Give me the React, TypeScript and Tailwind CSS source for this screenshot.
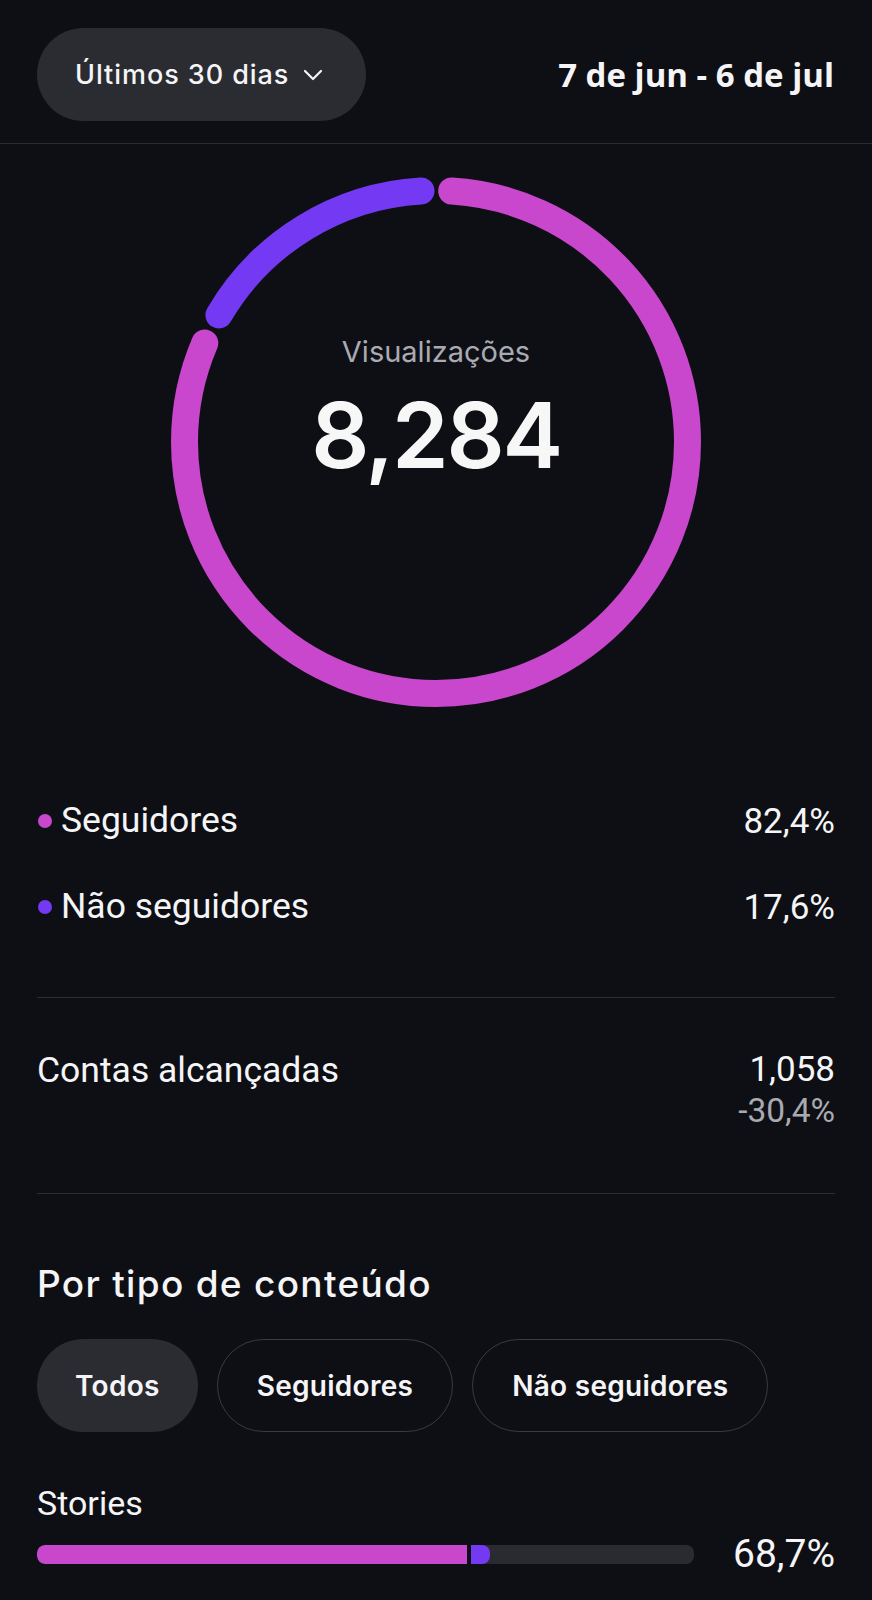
import React from "react";

const PINK = "#c847cc";
const PURPLE = "#7439f2";

function Donut() {
  const size = 530;
  const sw = 27;
  const r = (size - sw) / 2;
  const C = 2 * Math.PI * r;
  const g = 31.5;
  const pinkLen = 0.824 * C - g;
  const purpleLen = 0.176 * C - g;
  return (
    <svg width={size} height={size} viewBox={`0 0 ${size} ${size}`}>
      <g transform={`rotate(-90 ${size / 2} ${size / 2})`}>
        <circle
          cx={size / 2}
          cy={size / 2}
          r={r}
          fill="none"
          stroke={PINK}
          strokeWidth={sw}
          strokeLinecap="round"
          strokeDasharray={`${pinkLen} ${C}`}
          strokeDashoffset={-g / 2}
        />
        <circle
          cx={size / 2}
          cy={size / 2}
          r={r}
          fill="none"
          stroke={PURPLE}
          strokeWidth={sw}
          strokeLinecap="round"
          strokeDasharray={`${purpleLen} ${C}`}
          strokeDashoffset={-(0.824 * C + g / 2)}
        />
      </g>
    </svg>
  );
}

export default function App() {
  return (
    <div className="min-h-[1600px] w-[872px] bg-[#0e0f14] text-[#f5f5f7]">
      {/* Header */}
      <div className="flex h-[144px] items-center justify-between border-b border-[#2a2b30] pl-[37px] pr-[38px] pt-[6px]">
        <div className="flex h-[93px] items-center rounded-full bg-[#2b2c31] pl-[38px] pr-[43px]">
          <span className="font-['Inter',sans-serif] text-[27px] font-medium leading-none tracking-[0.035em]">
            Últimos 30 dias
          </span>
          <svg width="20" height="12" viewBox="0 0 20 12" className="ml-[14px]">
            <path d="M2 2 L10 10 L18 2" fill="none" stroke="#f5f5f7" strokeWidth="2.2" strokeLinecap="round" strokeLinejoin="round" />
          </svg>
        </div>
        <span className="font-['Open_Sans',sans-serif] text-[33px] font-bold leading-none">
          7 de jun - 6 de jul
        </span>
      </div>

      {/* Donut */}
      <div className="mt-[33px] flex justify-center">
        <div className="relative h-[530px] w-[530px]">
          <Donut />
          <div className="absolute inset-0 flex flex-col items-center justify-center">
            <span className="mt-[-66px] font-['Inter',sans-serif] text-[29px] leading-none text-[#a9abb3]">
              Visualizações
            </span>
            <span className="mt-[24px] font-['Inter',sans-serif] text-[91px] font-semibold leading-none tracking-[-0.025em] text-[#f7f7f8]">
              8,284
            </span>
          </div>
        </div>
      </div>

      {/* Legend */}
      <div className="mt-[71px] px-[37px] font-['Roboto',sans-serif]">
        <div className="flex h-[86px] items-center justify-between">
          <div className="flex items-center">
            <span className="ml-[1px] h-[14px] w-[14px] rounded-full" style={{ backgroundColor: PINK }} />
            <span className="ml-[9px] text-[35.5px] leading-none">Seguidores</span>
          </div>
          <span className="text-[35px] leading-none">82,4%</span>
        </div>
        <div className="flex h-[86px] items-center justify-between">
          <div className="flex items-center">
            <span className="ml-[1px] h-[14px] w-[14px] rounded-full" style={{ backgroundColor: PURPLE }} />
            <span className="ml-[9px] text-[35.5px] leading-none">Não seguidores</span>
          </div>
          <span className="text-[35px] leading-none">17,6%</span>
        </div>

        <div className="mt-[47px] h-px bg-[#2c2d32]" />

        {/* Contas alcançadas */}
        <div className="mt-[54px] flex items-start justify-between">
          <span className="text-[35.5px] leading-[36px]">Contas alcançadas</span>
          <div className="flex flex-col items-end">
            <span className="text-[35px] leading-[36px]">1,058</span>
            <span className="mt-[6px] text-[33.5px] leading-[34px] text-[#a8aab1]">-30,4%</span>
          </div>
        </div>

        <div className="mt-[65px] h-px bg-[#2c2d32]" />

        {/* Por tipo de conteúdo */}
        <h2 className="mt-[72px] font-['Inter',sans-serif] text-[37px] font-medium leading-[36px] tracking-[0.035em]">
          Por tipo de conteúdo
        </h2>

        <div className="mt-[37px] flex items-center gap-[19px] font-['Inter',sans-serif]">
          <div className="flex h-[93px] items-center rounded-full bg-[#2b2c31] px-[38px] text-[28px] font-semibold tracking-[0.01em]">
            Todos
          </div>
          <div className="flex h-[93px] items-center rounded-full border-[1.5px] border-[#3a3b41] px-[39px] text-[28px] font-semibold tracking-[0.01em]">
            Seguidores
          </div>
          <div className="flex h-[93px] items-center rounded-full border-[1.5px] border-[#3a3b41] px-[39px] text-[28px] font-semibold tracking-[0.01em]">
            Não seguidores
          </div>
        </div>

        {/* Stories */}
        <div className="mt-[54px] text-[34px] leading-[34px]">Stories</div>
        <div className="mt-[16px] flex h-[36px] items-center justify-between">
          <div className="flex h-[19px] w-[657px] items-center overflow-hidden rounded-[8px] bg-[#2a2b31]">
            <div className="h-full w-[430px] rounded-l-[8px]" style={{ backgroundColor: PINK }} />
            <div className="h-full w-[4px] bg-[#0e0f14]" />
            <div className="h-full w-[19px] rounded-r-[8px]" style={{ backgroundColor: PURPLE }} />
          </div>
          <span className="text-[39px] leading-none">68,7%</span>
        </div>
      </div>
    </div>
  );
}
